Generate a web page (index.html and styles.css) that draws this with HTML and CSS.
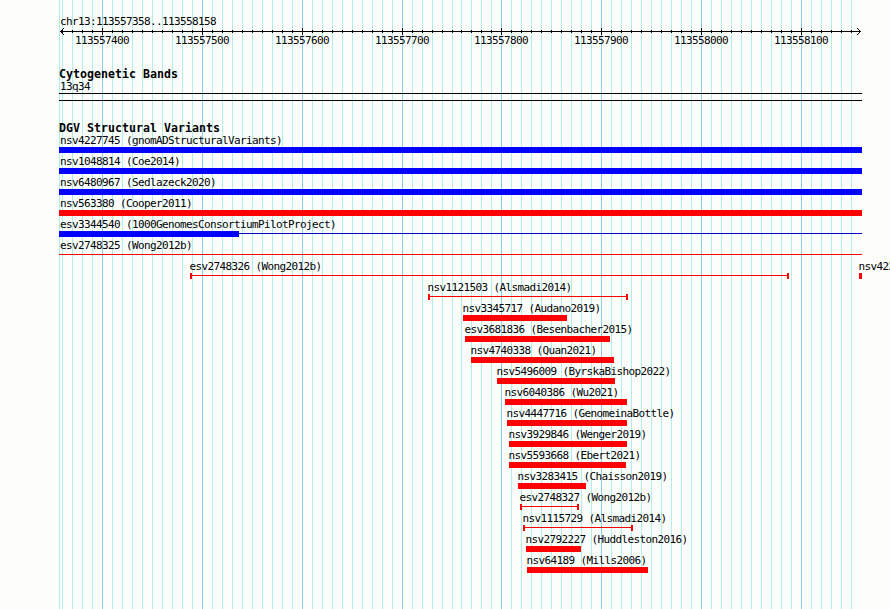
FILE: index.html
```html
<!DOCTYPE html>
<html lang="en">
<head>
<meta charset="utf-8">
<title>chr13:113557358..113558158</title>
<link rel="stylesheet" href="styles.css">
</head>
<body>
<main class="browser">
  <header class="ruler">
    <div class="region">chr13:113557358..113558158</div>
    <svg class="scale" width="890" height="7" viewBox="0 0 890 7" shape-rendering="crispEdges" aria-hidden="true">
      <path class="thin" d="M60 3.5H861"/>
      <path class="minor" d="M62 3.5H453M461 3.5H852"/>
      <path class="major" d="M102 3.5H403M501 3.5H802"/>
      <path class="head" d="M61 2h1v1h-1zM62 1h1v1h-1zM63 0h1v1h-1zM61 4h1v1h-1zM62 5h1v1h-1zM63 6h1v1h-1zM859 2h1v1h-1zM858 1h1v1h-1zM857 0h1v1h-1zM859 4h1v1h-1zM858 5h1v1h-1zM857 6h1v1h-1z"/>
    </svg>
    <div class="ticks">
      <span>113557400</span><span>113557500</span><span>113557600</span><span class="short">113557700</span><span>113557800</span><span>113557900</span><span>113558000</span><span>113558100</span>
    </div>
  </header>

  <section class="bands">
    <h2>Cytogenetic Bands</h2>
    <div class="label">13q34</div>
    <div class="band"></div>
  </section>

  <section class="variants">
    <h2>DGV Structural Variants</h2>
    <div class="row full gain" style="--x:59px;--w:803px"><div class="label">nsv4227745 (gnomADStructuralVariants)</div><div class="bar"></div></div>
    <div class="row full gain" style="--x:59px;--w:803px"><div class="label">nsv1048814 (Coe2014)</div><div class="bar"></div></div>
    <div class="row full gain" style="--x:59px;--w:803px"><div class="label">nsv6480967 (Sedlazeck2020)</div><div class="bar"></div></div>
    <div class="row full" style="--x:59px;--w:803px"><div class="label">nsv563380 (Cooper2011)</div><div class="bar"></div></div>
    <div class="row full gain" style="--x:59px;--w:803px"><div class="label">esv3344540 (1000GenomesConsortiumPilotProject)</div><div class="line part"></div></div>
    <div class="row full" style="--x:59px;--w:803px"><div class="label">esv2748325 (Wong2012b)</div><div class="line"></div></div>
    <div class="pair">
      <div class="row" style="--x:190px;--w:599px"><div class="label">esv2748326 (Wong2012b)</div><div class="line capped"></div></div>
      <div class="row" style="--x:70px;--w:3px"><div class="label">nsv422</div><div class="bar"></div></div>
    </div>
    <div class="row" style="--x:428px;--w:200px"><div class="label">nsv1121503 (Alsmadi2014)</div><div class="line capped"></div></div>
    <div class="row" style="--x:463px;--w:104px"><div class="label">nsv3345717 (Audano2019)</div><div class="bar"></div></div>
    <div class="row" style="--x:465px;--w:145px"><div class="label">esv3681836 (Besenbacher2015)</div><div class="bar"></div></div>
    <div class="row" style="--x:471px;--w:143px"><div class="label">nsv4740338 (Quan2021)</div><div class="bar"></div></div>
    <div class="row" style="--x:497px;--w:118px"><div class="label">nsv5496009 (ByrskaBishop2022)</div><div class="bar"></div></div>
    <div class="row" style="--x:505px;--w:122px"><div class="label">nsv6040386 (Wu2021)</div><div class="bar"></div></div>
    <div class="row" style="--x:507px;--w:120px"><div class="label">nsv4447716 (GenomeinaBottle)</div><div class="bar"></div></div>
    <div class="row" style="--x:509px;--w:118px"><div class="label">nsv3929846 (Wenger2019)</div><div class="bar"></div></div>
    <div class="row" style="--x:509px;--w:117px"><div class="label">nsv5593668 (Ebert2021)</div><div class="bar"></div></div>
    <div class="row" style="--x:518px;--w:68px"><div class="label">nsv3283415 (Chaisson2019)</div><div class="bar"></div></div>
    <div class="row" style="--x:520px;--w:59px"><div class="label">esv2748327 (Wong2012b)</div><div class="line capped"></div></div>
    <div class="row" style="--x:523px;--w:110px"><div class="label">nsv1115729 (Alsmadi2014)</div><div class="line capped"></div></div>
    <div class="row" style="--x:526px;--w:55px"><div class="label">nsv2792227 (Huddleston2016)</div><div class="bar"></div></div>
    <div class="row" style="--x:527px;--w:121px"><div class="label">nsv64189 (Mills2006)</div><div class="bar"></div></div>
  </section>
</main>
</body>
</html>
```
FILE: styles.css
```css
* { box-sizing: border-box; }

body { margin: 0; background: #fdfefc; }

.browser {
  --minor: #afeeeb;
  --major: #87ceeb;
  width: 890px;
  height: 609px;
  overflow: hidden;
  color: #000;
  font: 11px/13px "DejaVu Sans Mono", monospace;
  letter-spacing: -0.622px;
  white-space: nowrap;
  background:
    repeating-linear-gradient(to right, var(--major) 0 1px, transparent 1px 100px) 102px 0 / 301px 100% no-repeat,
    repeating-linear-gradient(to right, var(--major) 0 1px, transparent 1px 100px) 501px 0 / 301px 100% no-repeat,
    linear-gradient(var(--minor), var(--minor)) 59px 0 / 1px 100% no-repeat,
    repeating-linear-gradient(to right, var(--minor) 0 1px, transparent 1px 10px) 62px 0 / 391px 100% no-repeat,
    repeating-linear-gradient(to right, var(--minor) 0 1px, transparent 1px 10px) 461px 0 / 391px 100% no-repeat;
}

.ruler { height: 68px; padding-top: 15px; }
.region { height: 13px; padding-left: 60px; }
.scale { display: block; }
.scale path { fill: none; stroke: #000; stroke-width: 1; }
.scale .minor { stroke-width: 3; stroke-dasharray: 1 9; }
.scale .major { stroke-width: 7; stroke-dasharray: 1 99; }
.scale .head { fill: #000; stroke: none; }
.ticks { display: flex; padding-left: 75px; margin-top: -1px; }
.ticks span { flex: 0 0 100px; }
.ticks .short { flex-basis: 99px; }

h2 {
  height: 13px;
  margin: 0;
  padding-left: 59px;
  font: bold 11.6px/13px "DejaVu Sans Mono", monospace;
  letter-spacing: 0.016px;
}

.bands { height: 54px; }
.bands h2 { height: 12px; }
.bands .label { height: 13px; padding-left: 60px; }
.band {
  width: 803px;
  height: 8px;
  margin-left: 59px;
  border: solid #000;
  border-width: 1px 0;
}

.variants h2 { height: 12px; }
.row { width: calc(var(--x) + var(--w)); height: 21px; padding-left: var(--x); --color: #f00; }
.gain { --color: #00f; }
.row .label { height: 13px; margin-left: -0.5px; }
.full .label { margin-left: 1px; }
.bar { height: 6px; background: var(--color); }
.line { height: 6px; background: linear-gradient(var(--color), var(--color)) 0 2px / 100% 1px no-repeat; }
.capped { border: solid var(--color); border-width: 0 2px; }
.part {
  background:
    linear-gradient(var(--color), var(--color)) 0 0 / 180px 6px no-repeat,
    linear-gradient(#00c, #00c) 0 2px / 100% 1px no-repeat;
}
.pair { display: flex; }
.pair .row { flex: none; }
```
